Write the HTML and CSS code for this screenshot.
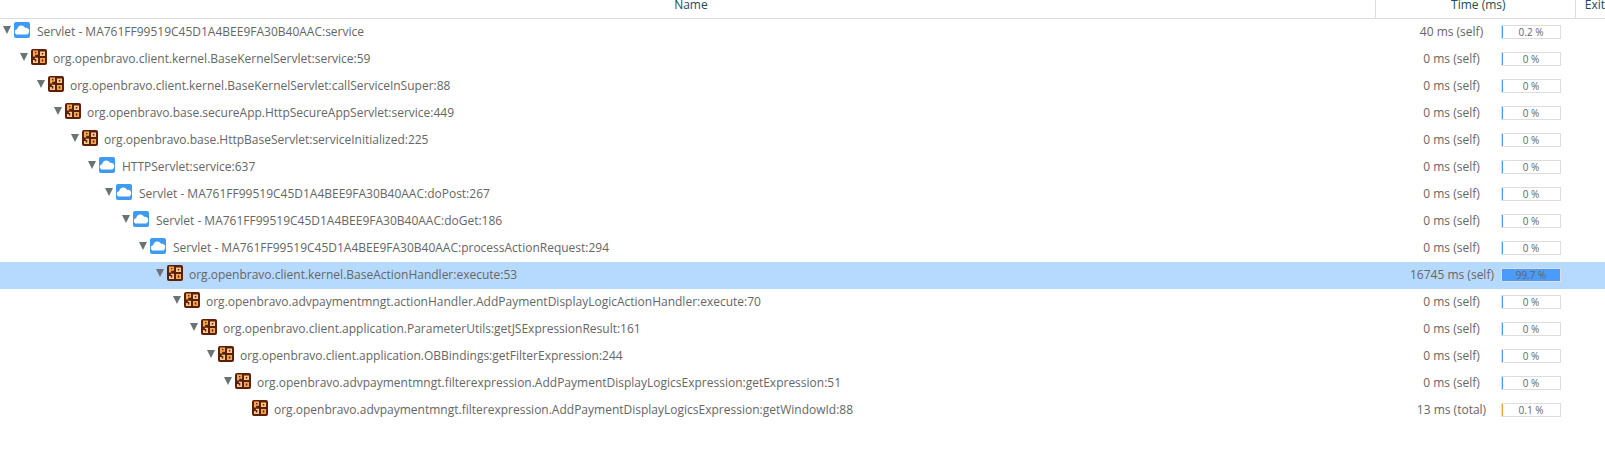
FILE: index.html
```html
<!DOCTYPE html>
<html lang="en">
<head>
<meta charset="utf-8">
<title>Call tree</title>
<link rel="stylesheet" href="styles.css">
</head>
<body>
<svg class="defs" width="0" height="0" aria-hidden="true">
<symbol id="cloud" viewBox="0 0 16 16">
<rect width="16" height="16" rx="2" fill="#3f9bf0"/>
<path d="M3.6 12.6 C1.8 12.6 .8 11.3 .8 9.9 C.8 8.5 1.9 7.4 3.2 7.3 C3.5 5.1 5.2 3.4 7.4 3.4 C9.1 3.4 10.5 4.4 11.1 5.9 C11.4 5.8 11.7 5.8 12 5.8 C13.9 5.8 15.2 7.3 15.2 9.2 C15.2 11.1 13.8 12.6 12.1 12.6 Z" fill="#fff"/>
</symbol>
<symbol id="pojo" viewBox="0 0 16 16">
<rect width="16" height="16" rx="2" fill="#5e1f08"/>
<path fill-rule="evenodd" d="M2 1.5h5v4.2H4.2V7.5H2zM4 3v1.2h1.4V3z" fill="#f2a94e"/>
<path fill-rule="evenodd" d="M9 2.5h5v4.5H9zM10.8 3.9v1.7h1.5V3.9z" fill="#f7c98a"/>
<path d="M2 11h1.8v1.4h1.5V10H3.8V8.8H7V14H2z" fill="#f7c98a"/>
<path fill-rule="evenodd" d="M9 9h5v5H9zM10.8 10.6v1.8h1.5v-1.8z" fill="#f2a94e"/>
</symbol>
</svg>
<header class="head">
<div class="col-name">Name</div>
<div class="col-time">Time (ms)</div>
<div class="col-exit">Exit</div>
</header>
<main class="tree">
<div class="row"><div class="node l0"><i class="arrow"></i><svg class="icon"><use href="#cloud"/></svg><span>Servlet - MA761FF99519C45D1A4BEE9FA30B40AAC:service</span></div><div class="time">40 ms (self)</div><div class="bar"><b style="width:1px"></b><span>0.2 %</span></div></div>
<div class="row"><div class="node l1"><i class="arrow"></i><svg class="icon tight"><use href="#pojo"/></svg><span>org.openbravo.client.kernel.BaseKernelServlet:service:59</span></div><div class="time">0 ms (self)</div><div class="bar"><b style="width:1px"></b><span>0 %</span></div></div>
<div class="row"><div class="node l2"><i class="arrow"></i><svg class="icon tight"><use href="#pojo"/></svg><span>org.openbravo.client.kernel.BaseKernelServlet:callServiceInSuper:88</span></div><div class="time">0 ms (self)</div><div class="bar"><b style="width:1px"></b><span>0 %</span></div></div>
<div class="row"><div class="node l3"><i class="arrow"></i><svg class="icon tight"><use href="#pojo"/></svg><span>org.openbravo.base.secureApp.HttpSecureAppServlet:service:449</span></div><div class="time">0 ms (self)</div><div class="bar"><b style="width:1px"></b><span>0 %</span></div></div>
<div class="row"><div class="node l4"><i class="arrow"></i><svg class="icon tight"><use href="#pojo"/></svg><span>org.openbravo.base.HttpBaseServlet:serviceInitialized:225</span></div><div class="time">0 ms (self)</div><div class="bar"><b style="width:1px"></b><span>0 %</span></div></div>
<div class="row"><div class="node l5"><i class="arrow"></i><svg class="icon"><use href="#cloud"/></svg><span>HTTPServlet:service:637</span></div><div class="time">0 ms (self)</div><div class="bar"><b style="width:1px"></b><span>0 %</span></div></div>
<div class="row"><div class="node l6"><i class="arrow"></i><svg class="icon"><use href="#cloud"/></svg><span>Servlet - MA761FF99519C45D1A4BEE9FA30B40AAC:doPost:267</span></div><div class="time">0 ms (self)</div><div class="bar"><b style="width:1px"></b><span>0 %</span></div></div>
<div class="row"><div class="node l7"><i class="arrow"></i><svg class="icon"><use href="#cloud"/></svg><span>Servlet - MA761FF99519C45D1A4BEE9FA30B40AAC:doGet:186</span></div><div class="time">0 ms (self)</div><div class="bar"><b style="width:1px"></b><span>0 %</span></div></div>
<div class="row"><div class="node l8"><i class="arrow"></i><svg class="icon"><use href="#cloud"/></svg><span>Servlet - MA761FF99519C45D1A4BEE9FA30B40AAC:processActionRequest:294</span></div><div class="time">0 ms (self)</div><div class="bar"><b style="width:1px"></b><span>0 %</span></div></div>
<div class="row selected"><div class="node l9"><i class="arrow"></i><svg class="icon tight"><use href="#pojo"/></svg><span>org.openbravo.client.kernel.BaseActionHandler:execute:53</span></div><div class="time">16745 ms (self)</div><div class="bar"><b style="width:99.7%"></b><span>99.7 %</span></div></div>
<div class="row"><div class="node l10"><i class="arrow"></i><svg class="icon tight"><use href="#pojo"/></svg><span>org.openbravo.advpaymentmngt.actionHandler.AddPaymentDisplayLogicActionHandler:execute:70</span></div><div class="time">0 ms (self)</div><div class="bar"><b style="width:1px"></b><span>0 %</span></div></div>
<div class="row"><div class="node l11"><i class="arrow"></i><svg class="icon tight"><use href="#pojo"/></svg><span>org.openbravo.client.application.ParameterUtils:getJSExpressionResult:161</span></div><div class="time">0 ms (self)</div><div class="bar"><b style="width:1px"></b><span>0 %</span></div></div>
<div class="row"><div class="node l12"><i class="arrow"></i><svg class="icon tight"><use href="#pojo"/></svg><span>org.openbravo.client.application.OBBindings:getFilterExpression:244</span></div><div class="time">0 ms (self)</div><div class="bar"><b style="width:1px"></b><span>0 %</span></div></div>
<div class="row"><div class="node l13"><i class="arrow"></i><svg class="icon tight"><use href="#pojo"/></svg><span>org.openbravo.advpaymentmngt.filterexpression.AddPaymentDisplayLogicsExpression:getExpression:51</span></div><div class="time">0 ms (self)</div><div class="bar"><b style="width:1px"></b><span>0 %</span></div></div>
<div class="row"><div class="node l14"><i class="arrow none"></i><svg class="icon tight"><use href="#pojo"/></svg><span>org.openbravo.advpaymentmngt.filterexpression.AddPaymentDisplayLogicsExpression:getWindowId:88</span></div><div class="time">13 ms (total)</div><div class="bar total"><b style="width:1px"></b><span>0.1 %</span></div></div>
</main>
</body>
</html>
```
FILE: styles.css
```css
html, body { margin: 0; padding: 0; background: #fff; overflow: hidden; }
body { font-family: "Open Sans", sans-serif; font-size: 12px; color: #666; height: 453px; }
.defs { position: absolute; }

.head { display: flex; height: 18px; border-bottom: 1px solid #ddd; color: #1f4a55; line-height: 10px; }
.col-name { width: 1377px; padding-left: 7px; text-align: center; border-right: 1px solid #ddd; box-sizing: border-box; }
.col-time { width: 200px; padding-left: 6px; text-align: center; border-right: 1px solid #ddd; box-sizing: border-box; }
.col-exit { flex: 1; padding-left: 9px; }

.row { display: flex; align-items: center; height: 27px; box-sizing: border-box; padding-bottom: 2px; }
.row.selected { background: #b5dafd; }
.node { width: 1376px; box-sizing: border-box; display: flex; align-items: center; white-space: nowrap; }
.arrow { width: 0; height: 0; margin: -3px 3px 0 3px; border-left: 4px solid transparent; border-right: 4px solid transparent; border-top: 8px solid #6a7474; }
.arrow.none { border-top-color: transparent; }
.icon { width: 16px; height: 16px; margin: -4px 7px 0 0; flex: none; }
.icon.tight { margin-right: 6px; }

.l1 { padding-left: 17px; } .l2 { padding-left: 34px; } .l3 { padding-left: 51px; }
.l4 { padding-left: 68px; } .l5 { padding-left: 85px; } .l6 { padding-left: 102px; }
.l7 { padding-left: 119px; } .l8 { padding-left: 136px; } .l9 { padding-left: 153px; }
.l10 { padding-left: 170px; } .l11 { padding-left: 187px; } .l12 { padding-left: 204px; }
.l13 { padding-left: 221px; } .l14 { padding-left: 238px; }

.time { width: 83px; margin-left: 34px; text-align: center; white-space: nowrap; }
.bar { position: relative; width: 60px; height: 14px; box-sizing: border-box; margin-left: 8px; border: 1px solid #ddd; background: #fff; font-size: 10px; line-height: 12px; text-align: center; }
.bar b { position: absolute; left: 0; top: 0; bottom: 0; background: #4b9bfb; }
.bar.total b { background: #f7a13c; }
.bar span { position: relative; }
```
